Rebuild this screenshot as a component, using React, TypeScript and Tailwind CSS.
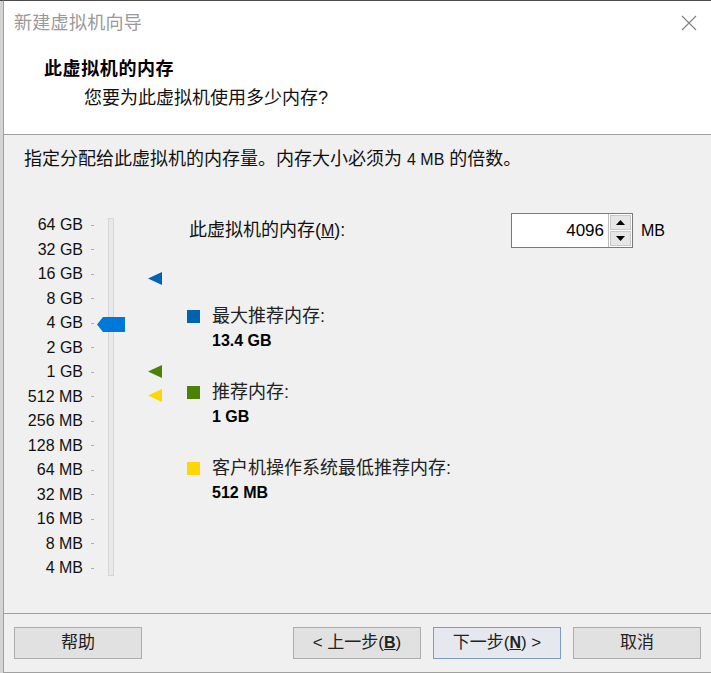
import React from "react"

const sans = { fontFamily: '"Liberation Sans", "Noto Sans CJK SC", sans-serif' }

const labels = [
  "64 GB", "32 GB", "16 GB", "8 GB", "4 GB", "2 GB", "1 GB", "512 MB",
  "256 MB", "128 MB", "64 MB", "32 MB", "16 MB", "8 MB", "4 MB",
]

// triangle markers beside the track, top offset relative to the track
const markers = [
  { top: 54, color: "#0063b1" },
  { top: 147, color: "#498205" },
  { top: 171, color: "#ffd700" },
]

function Triangle({ color }: { color: string }) {
  return (
    <svg width="14" height="13" viewBox="0 0 14 13">
      <polygon points="0,6.5 14,0 14,13" fill={color} />
    </svg>
  )
}

function Legend({ color, label, value }: { color: string; label: string; value: string }) {
  return (
    <div className="flex flex-col">
      <div className="flex items-center h-[20px]">
        <span className="w-[13px] h-[13px] mr-[12px]" style={{ backgroundColor: color }} />
        <span className="text-[18px] leading-[20px] text-[#222]">{label}</span>
      </div>
      <div className="pl-[25px] mt-[5px] text-[16px] leading-[20px] font-bold text-black">{value}</div>
    </div>
  )
}

function WizardButton({ children, primary }: { children: React.ReactNode; primary?: boolean }) {
  return (
    <button
      className={
        "w-[128px] h-[32px] border text-[17px] text-[#222] flex items-center justify-center " +
        (primary ? "border-[#7c9cc6] bg-[#e5e9ef]" : "border-[#adadad] bg-[#e1e1e1]")
      }
    >
      {children}
    </button>
  )
}

export default function App() {
  return (
    <div className="w-[711px] h-[673px] flex bg-[#f0f0f0] overflow-hidden" style={sans}>
      {/* strip of the window behind */}
      <div className="w-[3px] h-full bg-[#d4d4d4] border-t border-[#4a4a4a]" />

      <div className="flex-1 flex flex-col border-l border-t border-b border-l-[#a0a0a0] border-t-[#4a4a4a] border-b-[#a0a0a0]">
        {/* title bar */}
        <div className="h-[44px] bg-white flex items-center justify-between pl-[10px] pr-[14px]">
          <span className="text-[18px] tracking-[0.3px] text-[#999]">新建虚拟机向导</span>
          <svg width="16" height="16" viewBox="0 0 16 16">
            <path d="M1 1 L15 15 M15 1 L1 15" stroke="#808080" strokeWidth="1.1" />
          </svg>
        </div>

        {/* header */}
        <div className="h-[90px] bg-white border-b border-[#a0a0a0] flex flex-col">
          <div className="pl-[40px] pt-[13px] text-[18px] tracking-[0.6px] leading-[22px] font-bold text-black">此虚拟机的内存</div>
          <div className="pl-[80px] pt-[7px] text-[18px] leading-[22px] text-[#111]">您要为此虚拟机使用多少内存?</div>
        </div>

        {/* body */}
        <div className="flex-1 flex flex-col border-b border-[#a0a0a0]">
          <div className="pl-[20px] pt-[14px] text-[18px] leading-[20px] text-[#111]">
            指定分配给此虚拟机的内存量。内存大小必须为 <span className="text-[16px]">4 MB</span> 的倍数。
          </div>

          <div className="flex mt-[43px]">
            {/* slider */}
            <div className="flex items-start">
              <div className="w-[79px] flex flex-col items-end">
                {labels.map((l) => (
                  <div key={l} className="h-[24.5px] flex items-center text-[16px] text-[#111]">
                    {l}
                  </div>
                ))}
              </div>
              <div className="w-[25px] flex flex-col">
                {labels.map((l) => (
                  <div key={l} className="h-[24.5px] flex items-center pl-[8px]">
                    <span className="w-[3px] h-px bg-[#b0b0b0]" />
                  </div>
                ))}
              </div>
              <div className="relative mt-[5px] w-[6px] h-[358px] bg-[#e7eaea] border border-[#d6d6d6]">
                <svg className="absolute left-[-12px] top-[98px]" width="28" height="15" viewBox="0 0 28 15">
                  <polygon points="0,7.5 6,0 28,0 28,15 6,15" fill="#0078d7" />
                </svg>
              </div>
              <div className="relative w-[73px] mt-[5px] h-[358px]">
                {markers.map((m) => (
                  <div key={m.color} className="absolute left-[34px]" style={{ top: m.top }}>
                    <Triangle color={m.color} />
                  </div>
                ))}
              </div>
            </div>

            {/* values */}
            <div className="flex flex-col">
              <div className="flex items-center h-[35px]">
                <span className="w-[324px] pl-[2px] text-[18px] text-[#111]">
                  此虚拟机的内存(<span className="underline text-[16px]">M</span>):
                </span>
                <div className="flex h-[35px] border border-[#7a7a7a] bg-white">
                  <div className="w-[96px] flex items-center justify-end pr-[4px] text-[17px] text-black">4096</div>
                  <div className="w-[24px] flex flex-col border-l border-[#bcbcbc] bg-white p-px gap-px">
                    <div className="flex-1 bg-[#e6e6e6] border border-[#c8c8c8] flex items-center justify-center">
                      <svg width="9" height="5" viewBox="0 0 9 5">
                        <polygon points="0,5 4.5,0 9,5" fill="#000" />
                      </svg>
                    </div>
                    <div className="flex-1 bg-[#e6e6e6] border border-[#c8c8c8] flex items-center justify-center">
                      <svg width="9" height="5" viewBox="0 0 9 5">
                        <polygon points="0,0 9,0 4.5,5" fill="#000" />
                      </svg>
                    </div>
                  </div>
                </div>
                <span className="ml-[8px] text-[16px] text-black">MB</span>
              </div>

              <div className="mt-[58px] flex flex-col gap-[31px]">
                <Legend color="#0063b1" label="最大推荐内存:" value="13.4 GB" />
                <Legend color="#498205" label="推荐内存:" value="1 GB" />
                <Legend color="#ffd700" label="客户机操作系统最低推荐内存:" value="512 MB" />
              </div>
            </div>
          </div>
        </div>

        {/* footer */}
        <div className="h-[58px] flex items-start pt-[13px] pl-[10px] pr-[10px]">
          <WizardButton>帮助</WizardButton>
          <div className="flex-1" />
          <div className="flex gap-[12px]">
            <WizardButton>
              &lt; 上一步(<span className="underline font-bold text-[16px]">B</span>)
            </WizardButton>
            <WizardButton primary>
              下一步(<span className="underline font-bold text-[16px]">N</span>) &gt;
            </WizardButton>
            <WizardButton>取消</WizardButton>
          </div>
        </div>
      </div>
    </div>
  )
}
